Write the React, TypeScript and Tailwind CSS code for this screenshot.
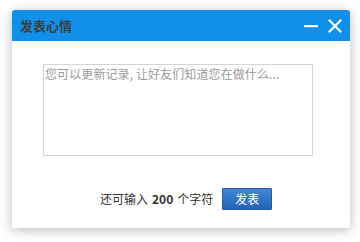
import React from 'react';

const App: React.FC = () => {
  return (
    <div className="w-[360px] h-[242px] bg-white pl-[12px] pt-[10px] font-['Noto_Sans_CJK_SC',sans-serif]">
      <div className="w-[338px] h-[218px] bg-white rounded-t-[3px] shadow-[0_2px_12px_rgba(0,0,0,0.28)] flex flex-col">
        <div className="h-[31px] bg-[#1190ea] rounded-t-[3px] flex items-center pl-[8px] pr-[8px]">
          <span className="text-[13px] font-bold text-[#3d3d3d] leading-none">发表心情</span>
          <div className="ml-auto flex items-center gap-[10px]">
            <svg width="14" height="14" viewBox="0 0 14 14">
              <rect x="0" y="6" width="14" height="2.2" fill="#fff" />
            </svg>
            <svg width="14" height="14" viewBox="0 0 14 14">
              <path d="M1.5 1.5 L12.5 12.5 M12.5 1.5 L1.5 12.5" stroke="#fff" strokeWidth="2.2" strokeLinecap="square" />
            </svg>
          </div>
        </div>
        <div className="pl-[31px] pt-[23px]">
          <textarea
            className="w-[270px] h-[92px] border border-[#d5d5d5] resize-none outline-none text-[12px] leading-[16px] px-[1px] pt-[1px] text-[#333] tracking-[0.1px] placeholder:text-[#9a9a9a]"
            placeholder="您可以更新记录, 让好友们知道您在做什么..."
          />
        </div>
        <div className="flex items-center pl-[88px] pt-[27px]">
          <span className="text-[12px] text-[#333] flex items-center">
            还可输入<b className="font-bold mx-[4px]">200</b>个字符
          </span>
          <button className="ml-[9px] w-[50px] h-[22px] border border-[#2a5a9c] bg-gradient-to-b from-[#4088d8] to-[#2563b2] text-white text-[12px] leading-none rounded-[1px]">
            发表
          </button>
        </div>
      </div>
    </div>
  );
};

export default App;
